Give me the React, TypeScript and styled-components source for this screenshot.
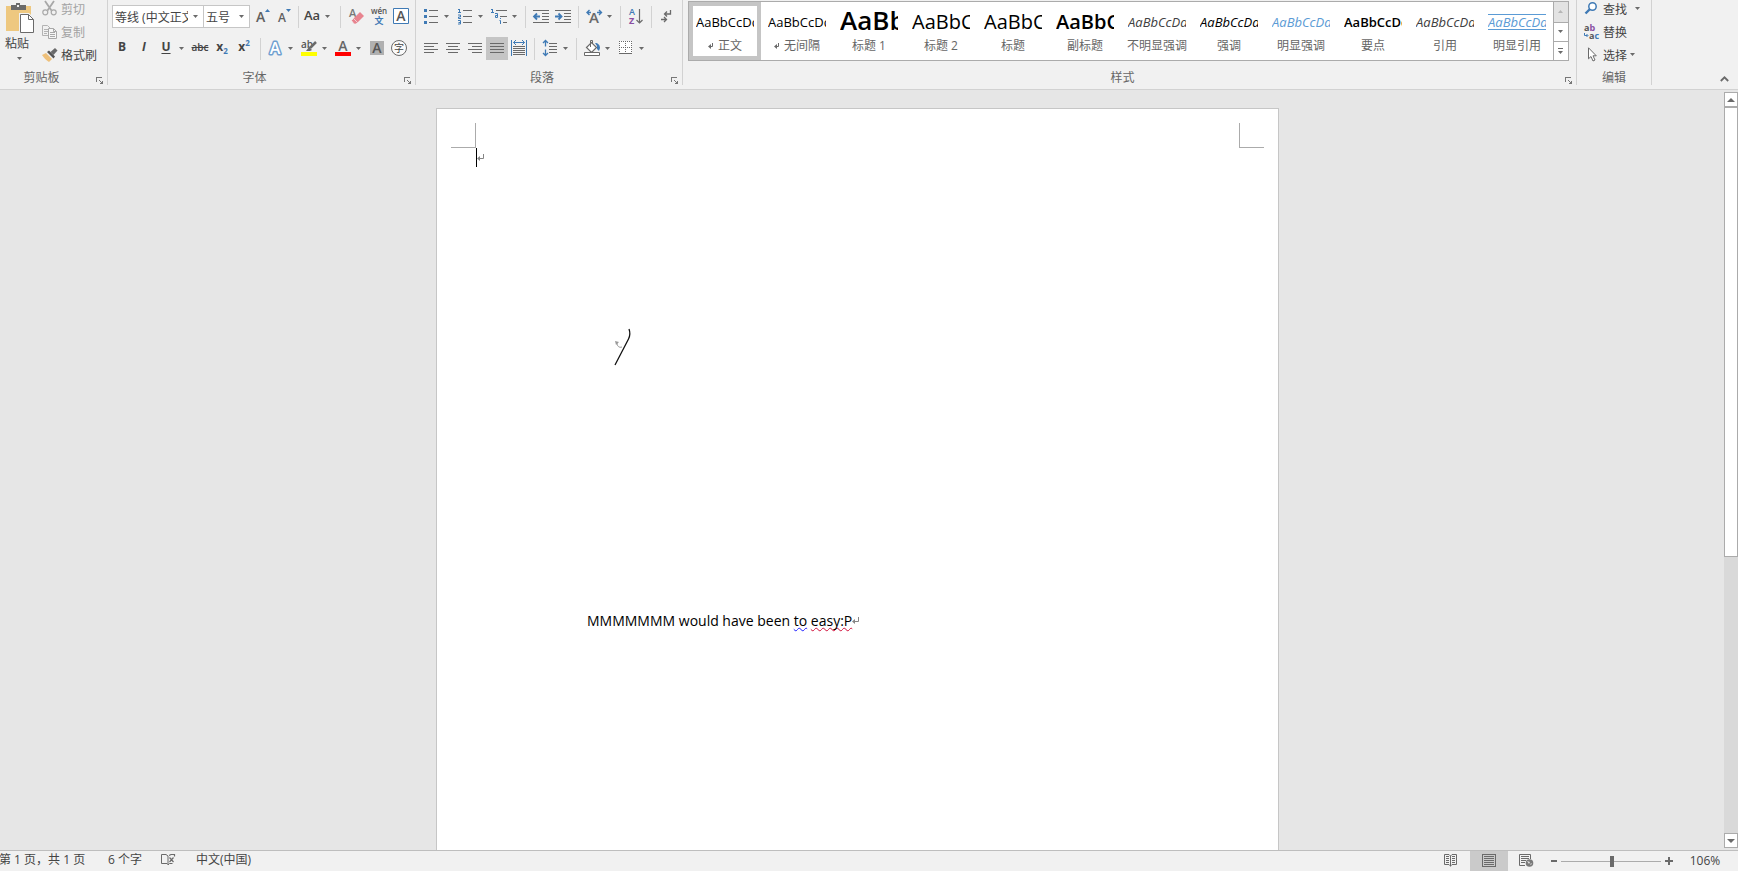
import React, { ReactNode } from "react";
import styled, { createGlobalStyle, css } from "styled-components";

const ink = "#444";
const gray = "#6a6a6a";
const blue = "#3f7ab5";

const Global = createGlobalStyle`
  * { box-sizing: border-box; }
  html, body { margin: 0; }
  body, button, select, input {
    font-family: "Open Sans", "Noto Sans CJK SC", sans-serif;
    font-size: 12px;
    color: ${ink};
  }
  svg { display: block; flex: none; overflow: visible; }
`;

const Shell = styled.div`
  display: flex;
  flex-direction: column;
  height: 100vh;
  overflow: hidden;
  background: #e6e6e6;
`;

/* ---------- ribbon ---------- */

const Ribbon = styled.header`
  display: flex;
  flex: none;
  align-items: flex-start;
  background: #f1f1f1;
  border-bottom: 1px solid #d2d2d2;
  padding-bottom: 4px;
  overflow: hidden;
`;

const Group = styled.section<{ $width?: number }>`
  display: flex;
  flex-direction: column;
  flex: none;
  width: ${(p) => (p.$width ? `${p.$width}px` : "auto")};
  height: 85px;
  border-right: 1px solid #d2d2d2;
`;

const ClipboardGroup = styled(Group)`
  margin-left: -10px;
`;

const GroupBody = styled.div`
  flex: 1;
  min-height: 0;
`;

const GroupFooter = styled.div`
  display: flex;
  align-items: flex-end;
  height: 15px;
`;

const GroupTitle = styled.h2`
  flex: 1;
  margin: 0;
  font-size: 12px;
  font-weight: 400;
  line-height: 14px;
  text-align: center;
  color: #666;
`;

const PlainButton = styled.button`
  display: flex;
  align-items: center;
  justify-content: center;
  flex: none;
  margin: 0;
  padding: 0;
  border: 0;
  background: transparent;
  white-space: nowrap;
`;

const Launcher = styled(PlainButton)`
  width: 14px;
  height: 8px;
`;

const ToolRow = styled.div<{ $pad: number; $top: number }>`
  display: flex;
  align-items: center;
  height: 23px;
  margin-top: ${(p) => p.$top}px;
  padding-left: ${(p) => p.$pad}px;
`;

const Tool = styled(PlainButton)<{ $on?: boolean }>`
  width: 22px;
  height: 23px;
  padding-bottom: 1px;
  background: ${(p) => (p.$on ? "#c5c5c5" : "transparent")};
`;

const DropButton = styled(PlainButton)`
  width: 10px;
  height: 23px;
  margin-right: 2px;
  padding-top: 1px;
`;

const Divider = styled.span<{ $before: number; $after: number }>`
  flex: none;
  width: 1px;
  height: 22px;
  margin: 0 ${(p) => p.$after}px 0 ${(p) => p.$before}px;
  background: #d2d2d2;
`;

const Field = styled.label<{ $width: number }>`
  display: flex;
  align-items: center;
  flex: none;
  width: ${(p) => p.$width}px;
  height: 23px;
  padding: 1px 4px 0 2px;
  border: 1px solid #c6c6c6;
  background: #fff;

  & + & {
    margin-right: 2px;
    border-left: 0;
  }
  select {
    appearance: none;
    flex: 1;
    min-width: 0;
    height: 20px;
    margin: 0 5px 0 0;
    padding: 0;
    border: 0;
    background: transparent;
    overflow: hidden;
  }
`;

const Glyph = styled.span<{ $bold?: boolean; $italic?: boolean; $line?: string; $size?: number }>`
  padding-bottom: 2px;
  font-size: ${(p) => p.$size ?? 12}px;
  font-weight: ${(p) => (p.$bold ? 700 : 600)};
  font-style: ${(p) => (p.$italic ? "italic" : "normal")};
  text-decoration: ${(p) => p.$line ?? "none"};
  text-underline-offset: 2px;
  line-height: 16px;

  sub, sup {
    font-size: 8px;
    line-height: 0;
    color: ${blue};
  }
`;

const PasteButton = styled(PlainButton)`
  flex-direction: column;
  justify-content: flex-start;
  width: 32px;
`;

const ClipboardBody = styled(GroupBody)`
  display: flex;
  gap: 6px;
  padding: 3px 0 0 14px;
`;

const PasteLabel = styled.span`
  padding-right: 6px;
  margin-bottom: 4px;
  line-height: 18px;
`;

const CommandList = styled.div<{ $left?: number; $top: number }>`
  display: flex;
  flex-direction: column;
  align-items: flex-start;
  margin-top: ${(p) => p.$top}px;
  padding-left: ${(p) => p.$left ?? 0}px;
`;

const Command = styled(PlainButton)`
  justify-content: flex-start;
  gap: 3px;
  height: 23px;

  &:disabled {
    color: #a3a3a3;
  }
`;

const CommandLine = styled.div`
  display: flex;
  align-items: center;
  gap: 6px;
`;

/* ---------- style gallery ---------- */

const StylesBody = styled(GroupBody)`
  padding: 1px 7px 0 5px;
`;

const Gallery = styled.div`
  display: flex;
  height: 60px;
  border: 1px solid #ababab;
  background: #fff;
`;

const StyleCard = styled(PlainButton)<{ $on?: boolean }>`
  flex-direction: column;
  justify-content: flex-start;
  width: 72px;
  height: 58px;
  padding: 0 3px;
  border: 4px solid ${(p) => (p.$on ? "#c5c5c5" : "transparent")};
`;

type Look = { size: number; weight?: number; italic?: boolean; color?: string; ruled?: boolean };

const Sample = styled.span<{ $look: Look }>`
  width: 58px;
  height: 33px;
  overflow: hidden;
  text-align: left;
  font-size: ${(p) => p.$look.size}px;
  line-height: ${(p) => (p.$look.size > 24 ? 28 : 32)}px;
  font-weight: ${(p) => p.$look.weight ?? 400};
  font-style: ${(p) => (p.$look.italic ? "italic" : "normal")};
  color: ${(p) => p.$look.color ?? "#000"};

  ${(p) =>
    p.$look.ruled &&
    css`
      height: 16px;
      margin: 8px 0 9px;
      border: solid #5b9bd5;
      border-width: 1px 0;
      line-height: 14px;
    `}
`;

const StyleName = styled.span`
  display: flex;
  align-items: center;
  gap: 4px;
  line-height: 14px;
  color: #666;
`;

const GalleryNav = styled.div`
  display: grid;
  grid-template-rows: 20px 18px 18px;
  row-gap: 1px;
  width: 15px;
  border-left: 1px solid #ababab;
  background: #ababab;
`;

const NavButton = styled(PlainButton)`
  background: #fff;
  &:disabled {
    background: #e3e3e3;
  }
`;

const Collapse = styled(PlainButton)`
  width: 16px;
  height: 12px;
  margin: auto 5px 0 auto;
  align-self: flex-end;
`;

/* ---------- document ---------- */

const Workspace = styled.main`
  display: flex;
  flex: 1;
  min-height: 0;
`;

const Canvas = styled.div`
  display: flex;
  flex: 1;
  justify-content: center;
  padding: 18px 9px 0 0;
`;

const Sheet = styled.article`
  width: 843px;
  padding: 14px;
  border: 1px solid #c6c6c6;
  border-bottom: 0;
  background: #fff;
`;

const Margins = styled.div`
  display: flex;
  justify-content: space-between;
`;

const Corner = styled.span<{ $side: "left" | "right" }>`
  width: 25px;
  height: 25px;
  border: 0 solid #ababab;
  border-bottom-width: 1px;
  ${(p) => (p.$side === "left" ? "border-right-width: 1px;" : "border-left-width: 1px;")}
`;

const CaretLine = styled.div`
  display: flex;
  align-items: center;
  height: 19px;
  margin-left: 25px;
  border-left: 1px solid #000;
`;

const Figure = styled.div`
  margin: 161px 0 0 163px;
`;

const Paragraph = styled.p`
  display: flex;
  align-items: center;
  margin: 243px 0 0 136px;
  font-size: 14px;
  line-height: 24px;
  color: #000;
`;

const Squiggle = styled.span<{ $color: string }>`
  text-decoration: underline wavy ${(p) => p.$color} 1px;
  text-underline-offset: 1px;
  text-decoration-skip-ink: none;
`;

const ScrollBar = styled.aside`
  display: flex;
  flex-direction: column;
  flex: none;
  width: 14px;
  padding: 2px 0;
`;

const ScrollArrow = styled(PlainButton)`
  height: 15px;
  border: 1px solid #ababab;
  background: #fff;
`;

const ScrollTrack = styled.div`
  flex: 1;
  background: #d9d9d9;
`;

const ScrollThumb = styled.div`
  height: 62%;
  border: 1px solid #ababab;
  background: #fff;
`;

/* ---------- status bar ---------- */

const Status = styled.footer`
  display: flex;
  flex: none;
  align-items: center;
  height: 21px;
  border-top: 1px solid #bebebe;
  background: #f1f1f1;
`;

const StatusInfo = styled.div`
  display: flex;
  flex: 1;
  align-items: center;
  gap: 19px;
  margin-left: -1px;
  line-height: 16px;
  padding-bottom: 2px;
`;

const PageCount = styled.span`
  min-width: 90px;
`;

const ViewButton = styled(PlainButton)<{ $on?: boolean }>`
  width: 38px;
  height: 20px;
  background: ${(p) => (p.$on ? "#cacaca" : "transparent")};
`;

const ZoomStep = styled(PlainButton)`
  width: 15px;
  height: 20px;
`;

const ZoomSlider = styled.input`
  appearance: none;
  width: 100px;
  height: 12px;
  margin: 0;
  background: linear-gradient(#ababab, #ababab) center / 100% 1px no-repeat;

  &::-webkit-slider-thumb {
    appearance: none;
    width: 4px;
    height: 11px;
    background: ${gray};
  }
`;

const ZoomValue = styled(PlainButton)`
  width: 62px;
  height: 20px;
  padding: 0 4px 2px 0;
`;

/* ---------- icons ---------- */

type SvgProps = { w: number; h: number; crisp?: boolean; children: ReactNode };

/* Boxes are rounded up to even sizes so that centred icons stay on whole pixels. */
const Svg = ({ w, h, crisp, children }: SvgProps) => {
  const width = w + (w % 2);
  const height = h + (h % 2);
  return (
    <svg width={width} height={height} viewBox={`0 0 ${width} ${height}`} fill="none" shapeRendering={crisp ? "crispEdges" : undefined} aria-hidden="true">
      {children}
    </svg>
  );
};

const Arrow = ({ up, faint }: { up?: boolean; faint?: boolean }) => (
  <Svg w={6} h={4}>
    <path d={up ? "M0 3h5L2.500 0z" : "M0 0h5L2.500 3z"} fill={faint ? "#b5b5b5" : gray} />
  </Svg>
);

const ScrollGlyph = ({ up }: { up?: boolean }) => (
  <Svg w={8} h={5}>
    <path d={up ? "M0 5h8L4 1z" : "M0 1h8L4 5z"} fill={gray} />
  </Svg>
);

const Drop = ({ label }: { label: string }) => (
  <DropButton aria-label={label}>
    <Arrow />
  </DropButton>
);

const LauncherIcon = () => (
  <Svg w={8} h={8} crisp>
    <path d="M0.500 5V0.500H6" stroke="#777" />
    <path d="M3 3l3 3" stroke="#777" shapeRendering="auto" />
    <path d="M7 3v4H3z" fill="#777" />
  </Svg>
);

const PasteIcon = () => (
  <Svg w={28} h={31}>
    <path d="M0 3h25v25H0z" fill="#eec880" />
    <path d="M5 2h5V0h4v2h6v5H5z" fill={gray} />
    <path d="M11 2h2v2h-2z" fill="#f1f1f1" />
    <path d="M13 10h10l6 6v16H13z" fill="#f1f1f1" />
    <path d="M14.500 11.500h8l5 5v13h-13z" fill="#fff" stroke={gray} />
    <path d="M22.500 11.500v5h5" stroke={gray} />
  </Svg>
);

const CutIcon = () => (
  <Svg w={16} h={15}>
    <path d="M3 0l6.500 9.500M12 0L5.500 9.500" stroke="#a8a8a8" strokeWidth="1.800" />
    <circle cx="3.300" cy="11.300" r="2.500" stroke="#a8a8a8" strokeWidth="1.200" />
    <circle cx="11.700" cy="11.300" r="2.500" stroke="#a8a8a8" strokeWidth="1.200" />
  </Svg>
);

const CopyIcon = () => (
  <Svg w={16} h={14}>
    <path d="M0.500 0.500h5l3 3v7h-8z" stroke="#b3b3b3" />
    <path d="M2 4.500h4M2 6.500h4M2 8.500h3" stroke="#b3b3b3" />
    <path d="M6.500 3.500h5l3 3v7h-8z" fill="#f6f6f6" stroke="#a8a8a8" />
    <path d="M11.500 3.500v3h3M8 7.500h5M8 9.500h5M8 11.500h5" stroke="#a8a8a8" />
  </Svg>
);

const BrushIcon = () => (
  <Svg w={16} h={14}>
    <path d="M0 7l4-2 6 6-3 3C4 12 2 10 0 7z" fill="#eec07a" />
    <path d="M5 4l2-1.500 6 6L11.500 10.500z" fill="#555" />
    <path d="M8.500 4L13 0l2.500 2.500L11.500 7z" fill={gray} />
  </Svg>
);

const GrowFont = ({ shrink }: { shrink?: boolean }) => (
  <Svg w={14} h={16}>
    <text x="0" y="14" fontFamily="Open Sans" fontWeight="600" fontSize={shrink ? 12 : 14} fill="#606060">A</text>
    <path d={shrink ? "M8 1h5l-2.500 3z" : "M9 4h5L11.500 1z"} fill={blue} />
  </Svg>
);

const EraserIcon = () => (
  <Svg w={15} h={16}>
    <text x="0" y="9" fontFamily="Open Sans" fontWeight="600" fontSize="11" fill="#777">A</text>
    <path d="M4 11l7-7 4 4-7 7z" fill="#e8848f" />
    <path d="M2.500 12.500L4.500 10.500l4 4-1.500 1.500H5z" fill="#e8848f" stroke="#f1f1f1" strokeWidth="0.700" />
  </Svg>
);

const PhoneticIcon = () => (
  <Svg w={16} h={17}>
    <text x="8" y="7" textAnchor="middle" fontFamily="Open Sans" fontWeight="600" fontSize="8" fill="#555">wén</text>
    <text x="8" y="17" textAnchor="middle" fontFamily="Noto Sans CJK SC" fontWeight="700" fontSize="9" fill={blue}>文</text>
  </Svg>
);

const BoxedA = ({ filled }: { filled?: boolean }) => (
  <Svg w={16} h={16}>
    {filled ? <path d="M1 1h14v14H1z" fill="#b0b0b0" /> : <path d="M0.500 0.500h15v15h-15z" fill="#fff" stroke={blue} />}
    <text x="8" y="13" textAnchor="middle" fontFamily="Open Sans" fontWeight="600" fontSize="14" fill="#555">A</text>
  </Svg>
);

const OutlineA = () => (
  <Svg w={16} h={16}>
    <text x="8" y="14" textAnchor="middle" fontFamily="Open Sans" fontWeight="600" fontSize="16" fill="#fff" stroke="#6fa0d0" strokeWidth="3" strokeLinejoin="round" paintOrder="stroke">A</text>
  </Svg>
);

const HighlightIcon = () => (
  <Svg w={16} h={16}>
    <text x="0" y="8" fontFamily="Open Sans" fontWeight="600" fontSize="10" fill="#555">ab</text>
    <path d="M15 2L9 8" stroke={gray} strokeWidth="2.500" />
    <path d="M8 7l3 3-2 1H5z" fill={gray} />
    <path d="M0 12h16v4H0z" fill="#ffff00" />
  </Svg>
);

const FontColorIcon = () => (
  <Svg w={16} h={16}>
    <text x="8" y="11" textAnchor="middle" fontFamily="Open Sans" fontWeight="600" fontSize="14" fill="#666">A</text>
    <path d="M0 12h16v4H0z" fill="#ff0000" />
  </Svg>
);

const EnclosedIcon = () => (
  <Svg w={16} h={16}>
    <circle cx="8" cy="8" r="7.500" fill="#fafafa" stroke={gray} />
    <text x="8" y="12" textAnchor="middle" fontFamily="Noto Sans CJK SC" fontSize="10" fill={ink}>字</text>
  </Svg>
);

const BulletsIcon = () => (
  <Svg w={14} h={16}>
    <path d="M0 1h3v3H0zM0 7h3v3H0zM0 13h3v3H0z" fill={blue} />
    <path d="M5 2.500h9M5 8.500h9M5 14.500h9" stroke={gray} />
  </Svg>
);

const NumberingIcon = () => (
  <Svg w={14} h={16}>
    <path d="M0 1.500h2M1.500 1v3M0 4.500h3M0 7h2.500v2H0.500v1.500H3M0 12.500h2.500v3.500H0M0.500 14.500h2" stroke={blue} />
    <path d="M5 2.500h9M5 8.500h9M5 14.500h9" stroke={gray} />
  </Svg>
);

const MultilevelIcon = () => (
  <Svg w={16} h={16}>
    <path d="M0 1.500h2M1.500 1v3M0 4.500h3M4 5.500h2.500v4h-2v-2h2M9.500 10v1M8.500 12.500h1V16" stroke={blue} />
    <path d="M5 2.500h11M9 8.500h7M12 14.500h4" stroke={gray} />
  </Svg>
);

const IndentIcon = ({ more }: { more?: boolean }) => (
  <Svg w={16} h={14}>
    <path d="M0 1.500h16M9 4.500h7M9 7.500h7M9 10.500h7M0 13.500h16" stroke={gray} />
    <path d={more ? "M0 7.500h6M3.500 4.500l3 3-3 3" : "M1 7.500h6M4 4.500L1 7.500l3 3"} stroke={blue} strokeWidth="1.800" />
  </Svg>
);

const ScaleIcon = () => (
  <Svg w={16} h={14}>
    <text x="8" y="14" textAnchor="middle" fontFamily="Open Sans" fontWeight="600" fontSize="15" fill={gray}>A</text>
    <path d="M5 3.500H1M3.500 1L1 3.500 3.500 6M11 3.500h4.500M13 1l2.500 2.500L13 6" stroke={blue} strokeWidth="1.400" />
  </Svg>
);

const SortIcon = () => (
  <Svg w={14} h={16}>
    <text x="0" y="7" fontFamily="Open Sans" fontWeight="600" fontSize="9" fill={blue}>A</text>
    <text x="0" y="16" fontFamily="Open Sans" fontWeight="700" fontSize="9" fill="#8a4fa3">Z</text>
    <path d="M10.500 1v14M7.500 12l3 3 3-3" stroke={gray} strokeWidth="1.200" />
  </Svg>
);

const MarksIcon = () => (
  <Svg w={11} h={12}>
    <path d="M9.500 0v4H4M6 1.500L3.500 4 6 6.500M0 9.500h5M3 7l2.500 2.500L3 12" stroke={gray} strokeWidth="1.300" />
  </Svg>
);

const AlignIcon = ({ kind }: { kind: "left" | "center" | "right" | "full" }) => {
  const d = {
    left: "M0 0.500h14M0 3.500h10M0 6.500h14M0 9.500h10",
    center: "M0 0.500h14M2 3.500h10M0 6.500h14M2 9.500h10",
    right: "M0 0.500h14M4 3.500h10M0 6.500h14M4 9.500h10",
    full: "M0 0.500h14M0 3.500h14M0 6.500h14M0 9.500h14",
  }[kind];
  return (
    <Svg w={14} h={10}>
      <path d={d} stroke={gray} />
    </Svg>
  );
};

const DistributeIcon = () => (
  <Svg w={16} h={16}>
    <path d="M0.500 0v16M15.500 0v16M2.500 2.500h11M5 0L2.500 2.500 5 5M11 0l2.500 2.500L11 5" stroke={blue} />
    <path d="M2 6.500h12M2 8.500h12M2 10.500h12M2 12.500h12M2 14.500h12" stroke={gray} />
  </Svg>
);

const SpacingIcon = () => (
  <Svg w={14} h={16}>
    <path d="M2.500 0.500v6M2.500 9.500v6M0 3l2.500-2.500L5 3M0 13l2.500 2.500L5 13" stroke={blue} strokeWidth="1.300" />
    <path d="M6 3.500h8M6 6.500h8M6 9.500h8M6 12.500h8" stroke={gray} />
  </Svg>
);

const FillIcon = () => (
  <Svg w={16} h={16}>
    <path d="M2.500 7.500l5-5 5 5-5 5z" fill="#fff" stroke={gray} strokeWidth="1.200" />
    <path d="M6.500 7V0.500h2V4" stroke={gray} />
    <path d="M11 3c3 0 5 2 5 5l-1 3-2-2V6z" fill={blue} />
    <path d="M0.500 12.500h15v3h-15z" fill="#fff" stroke={gray} />
  </Svg>
);

const BorderIcon = () => (
  <Svg w={13} h={13} crisp>
    <path d="M0 0h13v13H0z" fill="#fff" />
    <path d="M0 0.500h13M0 6.500h13M0.500 0v13M6.500 0v13M12.500 0v13" stroke={gray} strokeDasharray="1 1" />
    <path d="M0 12.500h13" stroke={gray} />
  </Svg>
);

const FindIcon = () => (
  <Svg w={16} h={13}>
    <circle cx="8.500" cy="4.500" r="3.700" fill="#fff" stroke={blue} strokeWidth="1.500" />
    <path d="M6 7L1.500 11.500" stroke={blue} strokeWidth="2.400" />
  </Svg>
);

const ReplaceIcon = () => (
  <Svg w={16} h={16}>
    <text x="0" y="7" fontFamily="Open Sans" fontWeight="700" fontSize="9" fill="#555">a<tspan fill="#8a4fa3">b</tspan></text>
    <text x="5" y="15" fontFamily="Open Sans" fontWeight="700" fontSize="9" fill="#555">a<tspan fill={blue}>c</tspan></text>
    <path d="M0.500 9v2.500h3M2.500 10L4 11.500 2.500 13" stroke={blue} />
  </Svg>
);

const PointerIcon = () => (
  <Svg w={16} h={15}>
    <path d="M4.500 0.800v11l2.500-2.300 2 4.500 2-1-2-4.200h3.300z" fill="#fff" stroke={gray} />
  </Svg>
);

const StyleMark = () => (
  <Svg w={6} h={6}>
    <path d="M4.500 0v3.500H1" stroke={gray} />
    <path d="M3 1v5L0 3.500z" fill={gray} />
  </Svg>
);

const ReturnMark = () => (
  <Svg w={7} h={7}>
    <path d="M6.500 0v4.500H1" stroke="#858585" />
    <path d="M3 2v5L0 4.500z" fill="#858585" />
  </Svg>
);

const ProofIcon = () => (
  <Svg w={15} h={13}>
    <path d="M7 11.500l-1-1H0.500v-9H5l2 1.500v9l1.500-1.500h3" stroke={gray} />
    <path d="M8 2.500L10 1.500h3.500v2M8.500 4.500l4 4.500M12.500 4.500l-4 4.500" stroke={gray} strokeWidth="1.200" />
  </Svg>
);

const ReadIcon = () => (
  <Svg w={13} h={13}>
    <path d="M6.500 2L5 0.500H0.500v10H5L6.500 12 8 10.500h4.500v-10H8zM6.500 2v10.500" stroke={gray} />
    <path d="M2 2.500h3M2 4.500h3M2 6.500h3M2 8.500h3M8 2.500h3M8 4.500h3M8 6.500h3M8 8.500h3" stroke={gray} />
  </Svg>
);

const PrintIcon = () => (
  <Svg w={14} h={13} crisp>
    <path d="M0.500 0.500h13v12h-13zM2 2.500h10M2 4.500h10M2 6.500h10M2 8.500h10M2 10.500h10" stroke={gray} />
  </Svg>
);

const WebIcon = () => (
  <Svg w={15} h={13}>
    <path d="M6 11.500H0.500v-11h11V5M2 2.500h8M2 4.500h8M2 6.500h5M2 8.500h4" stroke={gray} />
    <circle cx="10.500" cy="9" r="3.800" fill="#7a7a7a" />
    <path d="M8 7l3 1-1 2zM11 10l2-1-1 2z" fill="#e0e0e0" />
  </Svg>
);

/* ---------- data ---------- */

const styleCards: { name: string; text: string; look: Look; marked?: boolean }[] = [
  { name: "正文", text: "AaBbCcDd", look: { size: 13 }, marked: true },
  { name: "无间隔", text: "AaBbCcDd", look: { size: 13 }, marked: true },
  { name: "标题 1", text: "AaBb", look: { size: 26, weight: 600 } },
  { name: "标题 2", text: "AaBbC", look: { size: 20 } },
  { name: "标题", text: "AaBbC", look: { size: 20 } },
  { name: "副标题", text: "AaBbC", look: { size: 20, weight: 600 } },
  { name: "不明显强调", text: "AaBbCcDd", look: { size: 13, italic: true, color: "#404040" } },
  { name: "强调", text: "AaBbCcDd", look: { size: 13, italic: true } },
  { name: "明显强调", text: "AaBbCcDd", look: { size: 13, italic: true, color: "#5b9bd5" } },
  { name: "要点", text: "AaBbCcDd", look: { size: 13, weight: 600 } },
  { name: "引用", text: "AaBbCcDd", look: { size: 13, italic: true, color: "#404040" } },
  { name: "明显引用", text: "AaBbCcDd", look: { size: 13, italic: true, color: "#5b9bd5", ruled: true } },
];

/* ---------- page ---------- */

const Footer = ({ title, launcher = true }: { title: string; launcher?: boolean }) => (
  <GroupFooter>
    <GroupTitle>{title}</GroupTitle>
    {launcher && (
      <Launcher aria-label={`${title}选项`}>
        <LauncherIcon />
      </Launcher>
    )}
  </GroupFooter>
);

export default function App() {
  return (
    <Shell>
      <Global />
      <Ribbon>
        <ClipboardGroup $width={118}>
          <ClipboardBody>
            <PasteButton>
              <PasteIcon />
              <PasteLabel>粘贴</PasteLabel>
              <Arrow />
            </PasteButton>
            <CommandList $top={-6}>
              <Command disabled><CutIcon />剪切</Command>
              <Command disabled><CopyIcon />复制</Command>
              <Command><BrushIcon />格式刷</Command>
            </CommandList>
          </ClipboardBody>
          <Footer title="剪贴板" />
        </ClipboardGroup>

        <Group $width={308}>
          <GroupBody>
            <ToolRow $pad={4} $top={5}>
              <Field $width={92}>
                <select aria-label="字体"><option>等线 (中文正文)</option></select>
                <Arrow />
              </Field>
              <Field $width={46}>
                <select aria-label="字号"><option>五号</option></select>
                <Arrow />
              </Field>
              <Tool aria-label="增大字号"><GrowFont /></Tool>
              <Tool aria-label="减小字号"><GrowFont shrink /></Tool>
              <Divider $before={2} $after={2} />
              <Tool aria-label="更改大小写"><Glyph $size={13}>Aa</Glyph></Tool>
              <Drop label="大小写选项" />
              <Divider $before={5} $after={5} />
              <Tool aria-label="清除格式"><EraserIcon /></Tool>
              <Tool aria-label="拼音指南"><PhoneticIcon /></Tool>
              <Tool aria-label="字符边框"><BoxedA /></Tool>
            </ToolRow>
            <ToolRow $pad={3} $top={9}>
              <Tool><Glyph $bold>B</Glyph></Tool>
              <Tool><Glyph $bold $italic>I</Glyph></Tool>
              <Tool><Glyph $bold $line="underline">U</Glyph></Tool>
              <Drop label="下划线选项" />
              <Tool><Glyph $size={10} $line="line-through">abc</Glyph></Tool>
              <Tool><Glyph $bold>x<sub>2</sub></Glyph></Tool>
              <Tool><Glyph $bold>x<sup>2</sup></Glyph></Tool>
              <Divider $before={5} $after={3} />
              <Tool aria-label="文本效果"><OutlineA /></Tool>
              <Drop label="文本效果选项" />
              <Tool aria-label="突出显示"><HighlightIcon /></Tool>
              <Drop label="突出显示颜色" />
              <Tool aria-label="字体颜色"><FontColorIcon /></Tool>
              <Drop label="字体颜色选项" />
              <Tool aria-label="字符底纹"><BoxedA filled /></Tool>
              <Tool aria-label="带圈字符"><EnclosedIcon /></Tool>
            </ToolRow>
          </GroupBody>
          <Footer title="字体" />
        </Group>

        <Group $width={267}>
          <GroupBody>
            <ToolRow $pad={4} $top={5}>
              <Tool aria-label="项目符号"><BulletsIcon /></Tool>
              <Drop label="项目符号库" />
              <Tool aria-label="编号"><NumberingIcon /></Tool>
              <Drop label="编号库" />
              <Tool aria-label="多级列表"><MultilevelIcon /></Tool>
              <Drop label="多级列表库" />
              <Divider $before={3} $after={4} />
              <Tool aria-label="减少缩进量"><IndentIcon /></Tool>
              <Tool aria-label="增加缩进量"><IndentIcon more /></Tool>
              <Divider $before={4} $after={4} />
              <Tool aria-label="中文版式"><ScaleIcon /></Tool>
              <Drop label="中文版式选项" />
              <Divider $before={3} $after={4} />
              <Tool aria-label="排序"><SortIcon /></Tool>
              <Divider $before={4} $after={4} />
              <Tool aria-label="显示编辑标记"><MarksIcon /></Tool>
            </ToolRow>
            <ToolRow $pad={4} $top={9}>
              <Tool aria-label="左对齐"><AlignIcon kind="left" /></Tool>
              <Tool aria-label="居中"><AlignIcon kind="center" /></Tool>
              <Tool aria-label="右对齐"><AlignIcon kind="right" /></Tool>
              <Tool aria-label="两端对齐" aria-pressed $on><AlignIcon kind="full" /></Tool>
              <Tool aria-label="分散对齐"><DistributeIcon /></Tool>
              <Divider $before={4} $after={4} />
              <Tool aria-label="行距"><SpacingIcon /></Tool>
              <Drop label="行距选项" />
              <Divider $before={3} $after={4} />
              <Tool aria-label="底纹"><FillIcon /></Tool>
              <Drop label="底纹颜色" />
              <Tool aria-label="边框"><BorderIcon /></Tool>
              <Drop label="边框选项" />
            </ToolRow>
          </GroupBody>
          <Footer title="段落" />
        </Group>

        <Group>
          <StylesBody>
            <Gallery>
              {styleCards.map((card, i) => (
                <StyleCard key={card.name} $on={i === 0}>
                  <Sample $look={card.look}>{card.text}</Sample>
                  <StyleName>
                    {card.marked && <StyleMark />}
                    {card.name}
                  </StyleName>
                </StyleCard>
              ))}
              <GalleryNav>
                <NavButton disabled aria-label="上一行"><Arrow up faint /></NavButton>
                <NavButton aria-label="下一行"><Arrow /></NavButton>
                <NavButton aria-label="其他">
                  <Svg w={5} h={6}><path d="M0 0.500h5" stroke={gray} /><path d="M0 3h5L2.500 6z" fill={gray} /></Svg>
                </NavButton>
              </GalleryNav>
            </Gallery>
          </StylesBody>
          <Footer title="样式" />
        </Group>

        <Group $width={75}>
          <GroupBody>
            <CommandList $left={7} $top={-3}>
              <CommandLine>
                <Command><FindIcon />查找</Command>
                <Drop label="查找选项" />
              </CommandLine>
              <Command><ReplaceIcon />替换</Command>
              <Command><PointerIcon />选择<Arrow /></Command>
            </CommandList>
          </GroupBody>
          <Footer title="编辑" launcher={false} />
        </Group>

        <Collapse aria-label="折叠功能区">
          <Svg w={9} h={6}><path d="M0.800 5l3.700-3.700L8.200 5" stroke={gray} strokeWidth="1.800" /></Svg>
        </Collapse>
      </Ribbon>

      <Workspace>
        <Canvas>
          <Sheet>
            <Margins>
              <Corner $side="left" />
              <Corner $side="right" />
            </Margins>
            <CaretLine><ReturnMark /></CaretLine>
            <Figure>
              <Svg w={18} h={38}>
                <path d="M1 37L14.500 11C16 8 16.500 5 15 1" stroke="#111" strokeWidth="1.300" />
                <path d="M3 15c0 3 2 5 5 4" stroke="#999" />
                <path d="M1 13l4 1-3 3z" fill="#999" />
              </Svg>
            </Figure>
            <Paragraph>
              <span>
                MMMMMMM would have been <Squiggle $color="#2020ff">to</Squiggle>{" "}
                <Squiggle $color="#d0103a">easy:P</Squiggle>
              </span>
              <ReturnMark />
            </Paragraph>
          </Sheet>
        </Canvas>
        <ScrollBar>
          <ScrollArrow aria-label="向上滚动"><ScrollGlyph up /></ScrollArrow>
          <ScrollTrack><ScrollThumb /></ScrollTrack>
          <ScrollArrow aria-label="向下滚动"><ScrollGlyph /></ScrollArrow>
        </ScrollBar>
      </Workspace>

      <Status>
        <StatusInfo>
          <PageCount>第 1 页，共 1 页</PageCount>
          <span>6 个字</span>
          <ProofIcon />
          <span>中文(中国)</span>
        </StatusInfo>
        <ViewButton aria-label="阅读视图"><ReadIcon /></ViewButton>
        <ViewButton aria-label="页面视图" aria-pressed $on><PrintIcon /></ViewButton>
        <ViewButton aria-label="Web 版式"><WebIcon /></ViewButton>
        <ZoomStep aria-label="缩小"><Svg w={6} h={2}><path d="M0 0h6v2H0z" fill={gray} /></Svg></ZoomStep>
        <ZoomSlider type="range" aria-label="显示比例" min={0} max={100} defaultValue={51} />
        <ZoomStep aria-label="放大"><Svg w={8} h={8}><path d="M3 0h2v3h3v2H5v3H3V5H0V3h3z" fill={gray} /></Svg></ZoomStep>
        <ZoomValue>106%</ZoomValue>
      </Status>
    </Shell>
  );
}
